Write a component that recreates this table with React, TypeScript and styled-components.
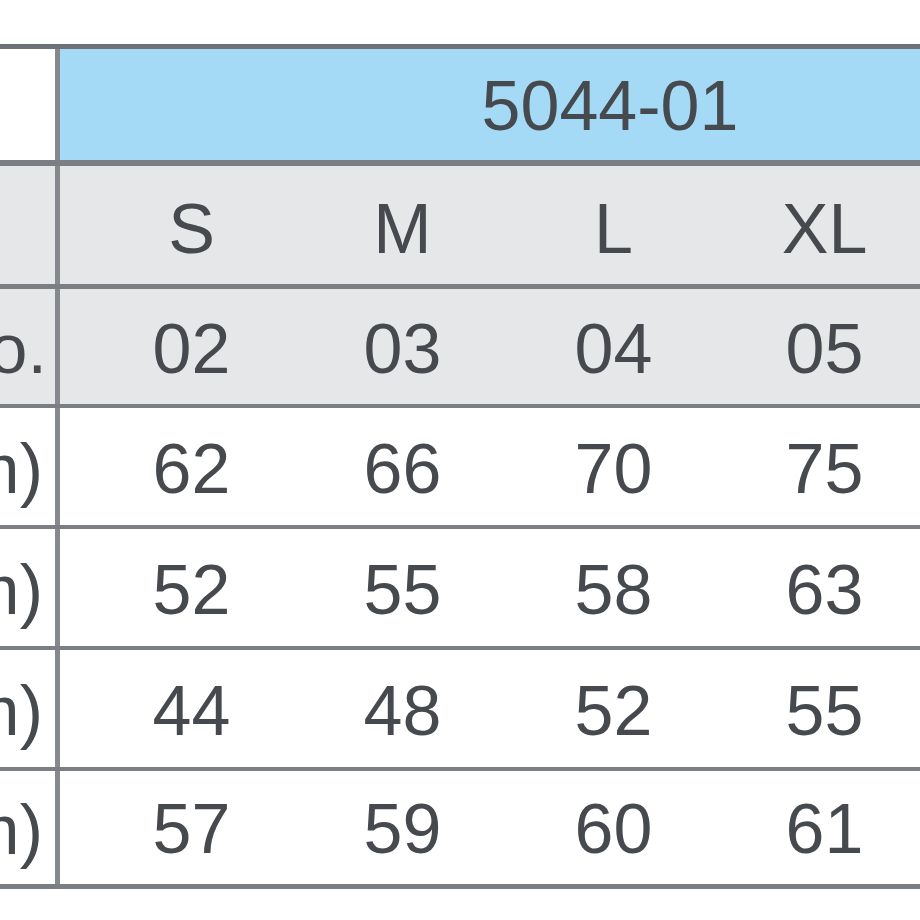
import React from "react";
import styled, { createGlobalStyle } from "styled-components";

const GlobalStyle = createGlobalStyle`
  html, body {
    margin: 0;
    padding: 0;
    background: #ffffff;
  }
  body {
    font-family: "Liberation Sans", Arial, "Noto Sans CJK JP", sans-serif;
  }
`;

const Page = styled.div`
  width: 920px;
  height: 920px;
  overflow: hidden;
  padding-top: 44px;
  box-sizing: border-box;
  background: #ffffff;
`;

const Table = styled.div`
  width: 1160px;
  border-top: 5px solid #6e7276;
  display: flex;
  flex-direction: column;
`;

const Row = styled.div<{ $bg: string; $h: number; $line: number }>`
  display: grid;
  grid-template-columns: 60px 1fr;
  height: ${(p) => p.$h}px;
  background: ${(p) => p.$bg};
  border-bottom: ${(p) => p.$line}px solid #7b7f83;
`;

const LabelCell = styled.div<{ $bg?: string; $pad?: number }>`
  box-sizing: border-box;
  border-right: 5px solid #85898d;
  background: ${(p) => p.$bg ?? "transparent"};
  display: flex;
  align-items: center;
  justify-content: flex-end;
  overflow: hidden;
  padding-right: ${(p) => p.$pad ?? 12}px;
  padding-top: 4px;
  white-space: nowrap;
  font-size: 70px;
  line-height: 1;
  color: #46494d;
`;

const HeaderCell = styled.div`
  background: #a4daf5;
  display: flex;
  align-items: center;
  justify-content: center;
  font-size: 70px;
  line-height: 1;
  color: #46494d;
  padding-top: 3px;
`;

const Cells = styled.div`
  display: grid;
  grid-template-columns: repeat(5, 211px);
  padding-left: 26px;
`;

const Cell = styled.div<{ $shift?: number }>`
  display: flex;
  align-items: center;
  justify-content: center;
  font-size: 70px;
  line-height: 1;
  color: #46494d;
  padding-top: ${(p) => p.$shift ?? 2}px;
`;

type DataRow = {
  label: string;
  values: string[];
  bg: string;
  h: number;
  line: number;
  shift?: number;
  pad?: number;
};

const rows: DataRow[] = [
  { label: "", values: ["S", "M", "L", "XL", "XXL"], bg: "#e6e7e9", h: 118, line: 5, shift: 8 },
  { label: "Color No.", values: ["02", "03", "04", "05", "06"], bg: "#e6e7e9", h: 115, line: 4, shift: 4, pad: 8 },
  { label: "着丈 (cm)", values: ["62", "66", "70", "75", "80"], bg: "#ffffff", h: 117, line: 4, shift: 4 },
  { label: "身幅 (cm)", values: ["52", "55", "58", "63", "68"], bg: "#ffffff", h: 117, line: 4, shift: 4 },
  { label: "肩幅 (cm)", values: ["44", "48", "52", "55", "58"], bg: "#ffffff", h: 117, line: 4, shift: 4 },
  { label: "袖丈 (cm)", values: ["57", "59", "60", "61", "62"], bg: "#ffffff", h: 113, line: 5, shift: 2 },
];

export default function App() {
  return (
    <>
      <GlobalStyle />
      <Page>
        <Table>
          <Row $bg="#ffffff" $h={111} $line={6}>
            <LabelCell $bg="#ffffff" />
            <HeaderCell>5044-01</HeaderCell>
          </Row>
          {rows.map((r, i) => (
            <Row key={i} $bg={r.bg} $h={r.h} $line={r.line}>
              <LabelCell $pad={r.pad}>{r.label}</LabelCell>
              <Cells>
                {r.values.map((v) => (
                  <Cell key={v} $shift={r.shift}>
                    {v}
                  </Cell>
                ))}
              </Cells>
            </Row>
          ))}
        </Table>
      </Page>
    </>
  );
}
